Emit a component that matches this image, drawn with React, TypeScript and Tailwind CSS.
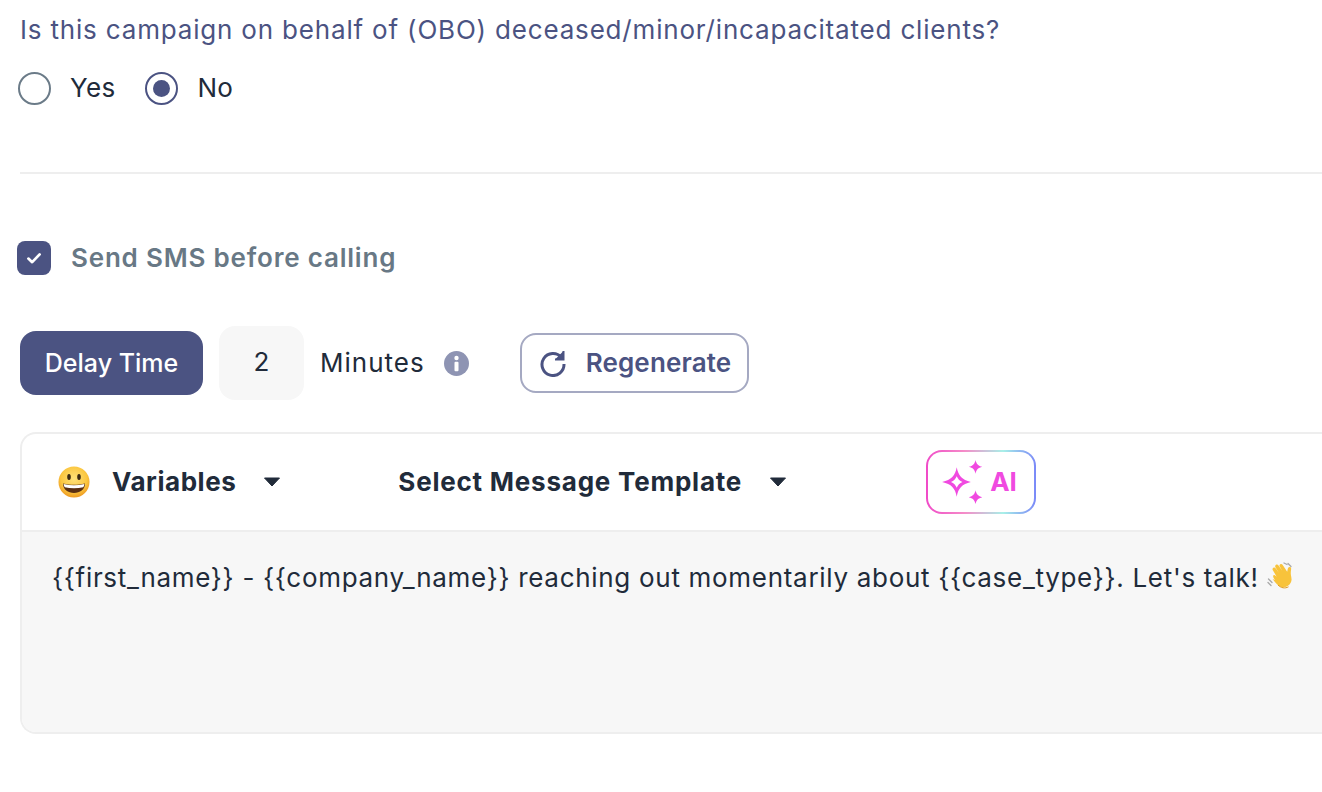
import React from "react";

function Caret({ className }: { className: string }) {
  return (
    <svg className={className} width="18" height="10" viewBox="0 0 18 10">
      <path d="M1.500 1h15L9 9z" fill="#212b3a" stroke="#212b3a" strokeWidth="1" strokeLinejoin="round" />
    </svg>
  );
}

function Grin() {
  return (
    <svg width="32" height="32" viewBox="0 0 32 32">
      <defs>
        <radialGradient id="face" cx="50%" cy="40%" r="60%">
          <stop offset="0%" stopColor="#ffe27a" />
          <stop offset="70%" stopColor="#fbc63f" />
          <stop offset="100%" stopColor="#ee9a22" />
        </radialGradient>
      </defs>
      <circle cx="16" cy="16" r="15.500" fill="url(#face)" />
      <ellipse cx="11" cy="11" rx="1.800" ry="3" fill="#3d2a12" />
      <ellipse cx="21" cy="11" rx="1.800" ry="3" fill="#3d2a12" />
      <path d="M5 17.500c7 1.800 15 1.800 22 0 0 6-5 9.500-11 9.500S5 23.500 5 17.500z" fill="#5a2f12" />
      <path d="M5.600 18c6.800 1.700 14 1.700 20.800 0-.1 1.400-.5 2.400-1.100 3.200-6 1.300-12.600 1.300-18.600 0-.6-.8-1-1.800-1.100-3.200z" fill="#fff" />
    </svg>
  );
}

function Wave() {
  return (
    <svg width="30" height="30" viewBox="0 0 30 30">
      <g fill="none" stroke="#a9a9a9" strokeWidth="1.300" strokeLinecap="round">
        <path d="M1.500 18l3.500 3.500M1 21.500l3 3" />
        <path d="M17 2l3 1.500M21 2.500l3 3" />
      </g>
      <path
        d="M8 19c-1.500-2-2.500-4-1.500-4.800 1-.8 2.300.5 3.300 1.800L6 9.500c-.8-1.300-.5-2.300.4-2.800.9-.5 1.900 0 2.600 1.100l3 4.200-3.400-5.500c-.7-1.200-.5-2.300.4-2.800.9-.5 2-.1 2.700 1.100l3.500 5-2.300-4c-.7-1.100-.5-2.100.4-2.600.9-.5 1.900-.1 2.600 1l4.300 6.600.6-3c.3-1.400 1.200-2.100 2.200-1.800 1 .3 1.300 1.200 1.100 2.400-.5 2.800-.4 5.200.2 7.500.9 3.600-.3 7-3.600 9-3.700 2.300-7.700 1.400-10.500-1.300-1.800-1.800-3.300-3.700-4.600-5.500z"
        fill="#f8c33b"
      />
      <path d="M11 24c3 3 7 3.800 10.500 1.800" fill="none" stroke="#e39a1c" strokeWidth="1" />
    </svg>
  );
}

export default function App() {
  return (
    <div className="h-[792px] w-[1322px] overflow-hidden bg-white pl-5 font-['Inter',sans-serif] text-[#212b3a]">
      <p className="flex h-[60px] items-center whitespace-nowrap text-[26px] leading-[30px] tracking-[0.82px] text-[#4b5382]">
        Is this campaign on behalf of (OBO) deceased/minor/incapacitated clients?
      </p>

      <div className="ml-[-2px] mt-3 flex h-[33px] items-center text-[26px] tracking-[0.3px]">
        <span className="h-[33px] w-[33px] rounded-full border-2 border-[#6b7b88]" />
        <span className="mb-[2px] ml-[19px] leading-none">Yes</span>
        <span className="ml-[30px] flex h-[33px] w-[33px] items-center justify-center rounded-full border-2 border-[#4b5382]">
          <span className="h-[17px] w-[17px] rounded-full bg-[#4b5382]" />
        </span>
        <span className="mb-[2px] ml-[19px] leading-none">No</span>
      </div>

      <div className="mt-[67px] h-0.5 bg-[#eeeeee]" />

      <div className="ml-[-3px] mt-[67px] flex h-[34px] items-center">
        <span className="flex h-[34px] w-[34px] items-center justify-center rounded-lg bg-[#4b5382]">
          <svg width="18" height="16" viewBox="0 0 16 14">
            <path d="M3 7.500l3.400 3.200L13 3.800" fill="none" stroke="#fff" strokeWidth="2.400" strokeLinecap="round" strokeLinejoin="round" />
          </svg>
        </span>
        <span className="mb-[2px] ml-5 text-[26px] font-semibold tracking-[0.8px] text-[#687885]">Send SMS before calling</span>
      </div>

      <div className="mt-[51px] flex h-[74px] items-center">
        <button className="h-16 w-[183px] rounded-2xl bg-[#4b5382] pt-[2px] text-[25px] font-medium text-white">Delay Time</button>
        <div className="ml-4 flex h-[74px] w-[85px] items-center justify-center rounded-2xl bg-[#f7f7f7] pb-[3px] text-[26px]">2</div>
        <span className="mb-[2px] ml-4 text-[26px] tracking-[1px]">Minutes</span>
        <svg className="ml-[19px]" width="25" height="25" viewBox="0 0 25 25">
          <circle cx="12.500" cy="12.500" r="12.500" fill="#8e94b3" />
          <circle cx="12.500" cy="7" r="2.200" fill="#fff" />
          <rect x="10.500" y="10.800" width="4" height="9.500" rx="1" fill="#fff" />
        </svg>
        <button className="ml-[51px] flex h-[60px] w-[229px] items-center rounded-2xl border-2 border-[#a5a9c2] pl-[17px] text-[26px] font-semibold tracking-[0.15px] text-[#4b5382]">
          <svg width="28" height="28" viewBox="0 0 28 28" fill="none" stroke="#4b5382" strokeWidth="3">
            <path d="M22.500 8.500A11 11 0 1 0 25 15" />
            <path d="M24.500 2v8.500H16" fill="#4b5382" strokeWidth="2" />
          </svg>
          <span className="mb-[2px] ml-[19px]">Regenerate</span>
        </button>
      </div>

      <div className="mr-[-20px] mt-8 h-[302px] overflow-hidden rounded-l-2xl border-y-2 border-l-2 border-[#eeeeee]">
        <div className="flex h-[98px] items-center border-b-2 border-[#eeeeee] pb-[1px]">
          <span className="ml-9"><Grin /></span>
          <span className="ml-[22px] text-[26px] font-bold tracking-[0.55px]">Variables</span>
          <Caret className="ml-[27px]" />
          <span className="ml-[117px] text-[26px] font-bold tracking-[0.78px]">Select Message Template</span>
          <Caret className="ml-[27px]" />
          <div className="ml-[139px] rounded-2xl bg-[linear-gradient(90deg,#f04ac8_0%,#f58cc8_35%,#a8f0e8_70%,#7a88f8_100%)] p-0.5">
            <div className="flex h-[60px] w-[106px] items-center rounded-[14px] bg-white pl-[13px]">
              <svg width="44" height="46" viewBox="0 0 42 44" fill="#f04ae0">
                <path fillRule="evenodd" d="M15 8c1.500 8 5 12 13.500 14C20 24 16.500 28 15 36 13.500 28 10 24 1 22c9-2 12.500-6 14-14zm0 8.500c-1 2.500-2.800 4.300-5.500 5.500 2.700 1.200 4.500 3 5.500 5.500 1-2.500 2.800-4.300 5.500-5.500-2.700-1.200-4.500-3-5.500-5.500z" />
                <path d="M33 1c.8 3.800 2.500 5.600 6.500 6.500-4 .9-5.700 2.700-6.500 6.500-.8-3.800-2.500-5.600-6.500-6.500C30.500 6.600 32.200 4.800 33 1z" />
                <path d="M33 30c.8 3.800 2.500 5.600 6.500 6.500-4 .9-5.700 2.700-6.500 6.500-.8-3.800-2.500-5.600-6.500-6.500 4-.9 5.700-2.700 6.500-6.500z" />
              </svg>
              <span className="ml-[5px] text-[26px] font-bold text-[#f04ae0]">AI</span>
            </div>
          </div>
        </div>
        <div className="flex h-[200px] items-start bg-[#f7f7f7] pl-[30px] pt-[28px] text-[26px] leading-[36px] tracking-[0.7px]">
          <span className="whitespace-nowrap">{"{{first_name}} - {{company_name}} reaching out momentarily about {{case_type}}. Let's talk!"}</span>
          <span className="ml-2 mt-[1px]"><Wave /></span>
        </div>
      </div>
    </div>
  );
}
